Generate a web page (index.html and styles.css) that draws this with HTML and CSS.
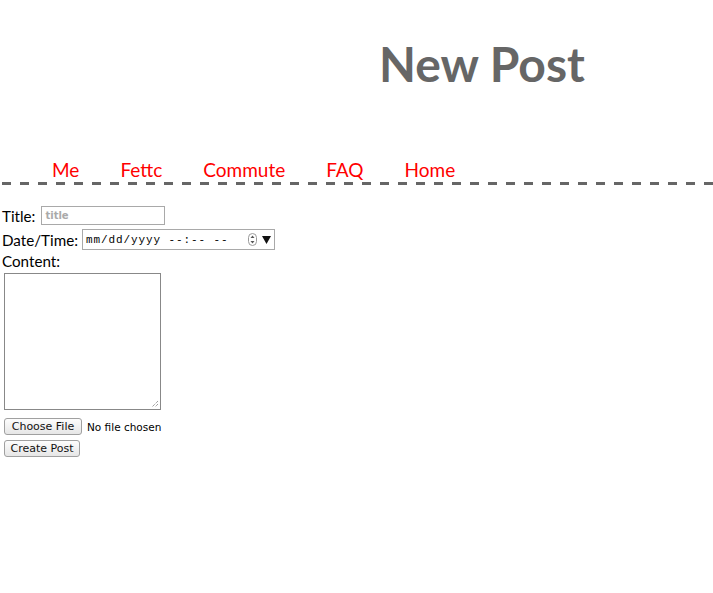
FILE: index.html
```html
<!DOCTYPE html>
<html>
<head>
<meta charset="utf-8">
<link rel="stylesheet" href="styles.css">
</head>
<body>
<header class="masthead">
  <h1 class="title">New Post</h1>
</header>
<nav class="nav">
  <a href="#">Me</a>
  <a href="#">Fettc</a>
  <a href="#">Commute</a>
  <a href="#">FAQ</a>
  <a href="#">Home</a>
</nav>
<form class="post-form">
  <div class="row row-title">
    <label class="lbl">Title:</label>
    <span class="field title-field">title</span>
  </div>
  <div class="row row-dt">
    <label class="lbl">Date/Time:</label>
    <span class="field dt-field">
      <span class="dt-text">mm/dd/yyyy --:-- --</span>
      <svg class="spin" width="9" height="13" viewBox="0 0 9 13">
        <rect x="0.5" y="0.5" width="8" height="12" rx="4" fill="#fff" stroke="#9a9a9a"/>
        <path d="M2.5 5 L4.5 2.5 L6.5 5 Z" fill="#555"/>
        <path d="M2.5 8 L4.5 10.5 L6.5 8 Z" fill="#555"/>
      </svg>
      <svg class="arrow" width="9" height="8" viewBox="0 0 9 8">
        <path d="M0 0 L9 0 L4.5 8 Z" fill="#111"/>
      </svg>
    </span>
  </div>
  <div class="row row-content">
    <label class="lbl">Content:</label>
  </div>
  <div class="area">
    <svg class="grip" width="8" height="8" viewBox="0 0 8 8">
      <path d="M7 1 L1 7 M7 4 L4 7" stroke="#777" stroke-width="1" stroke-dasharray="1 1"/>
    </svg>
  </div>
  <div class="row row-file">
    <span class="btn btn-file">Choose File</span>
    <span class="nofile">No file chosen</span>
  </div>
  <div class="row row-submit">
    <span class="btn btn-submit">Create Post</span>
  </div>
</form>
</body>
</html>
```
FILE: styles.css
```css
html, body {
  margin: 0;
  padding: 0;
  background: #fff;
}
body {
  font-family: Lato, "Open Sans", sans-serif;
  color: #000;
}
.masthead {
  height: 159px;
}
.title {
  margin: 0;
  padding: 36px 0 0 379px;
  font-size: 48px;
  font-weight: bold;
  color: #666;
  line-height: 56px;
}
.nav {
  display: flex;
  gap: 41px;
  padding: 0 0 3px 52px;
  height: 23px;
  line-height: 22px;
  background-image: linear-gradient(90deg, #666 9px, transparent 9px);
  background-size: 18px 3px;
  background-repeat: repeat-x;
  background-position: 2px 100%;
}
.nav a {
  color: #f00;
  text-decoration: none;
  font-size: 19px;
}
.post-form {
  padding: 20px 0 0 2px;
  font-size: 15.2px;
}
.row {
  display: flex;
  align-items: center;
  gap: 4px;
}
.row-title {
  height: 21px;
  gap: 6px;
}
.row-dt {
  height: 23px;
  margin-top: 2px;
}
.row-content {
  height: 20px;
}
.lbl {
  line-height: 20px;
}
.field {
  box-sizing: border-box;
  border: 1px solid #a9a9a9;
  background: #fff;
  display: inline-flex;
  align-items: center;
}
.title-field {
  width: 124px;
  height: 19px;
  padding-left: 3px;
  font-family: "DejaVu Sans", sans-serif;
  font-size: 10px;
  font-weight: bold;
  color: #aaa;
}
.dt-field {
  width: 193px;
  height: 21px;
  padding-left: 3px;
}
.dt-text {
  font-family: "Liberation Mono", monospace;
  font-size: 11px;
  letter-spacing: 0.9px;
  white-space: pre;
  width: 162px;
}
.spin {
  margin-right: 5px;
}
.area {
  position: relative;
  box-sizing: border-box;
  width: 157px;
  height: 137px;
  margin: 2px 0 8px 2px;
  border: 1px solid #888;
}
.grip {
  position: absolute;
  right: 1px;
  bottom: 1px;
}
.row-file {
  gap: 5px;
  height: 17px;
}
.row-submit {
  height: 17px;
  margin-top: 5px;
}
.btn {
  box-sizing: border-box;
  display: inline-flex;
  align-items: center;
  justify-content: center;
  height: 17px;
  margin-left: 2px;
  border: 1px solid #a0a0a0;
  border-radius: 3px;
  background: linear-gradient(#fdfdfd, #e6e6e6);
  font-family: "DejaVu Sans", sans-serif;
  font-size: 11px;
  color: #111;
}
.btn-file {
  width: 78px;
}
.btn-submit {
  width: 76px;
}
.nofile {
  font-family: "DejaVu Sans", sans-serif;
  font-size: 10.5px;
}
```
